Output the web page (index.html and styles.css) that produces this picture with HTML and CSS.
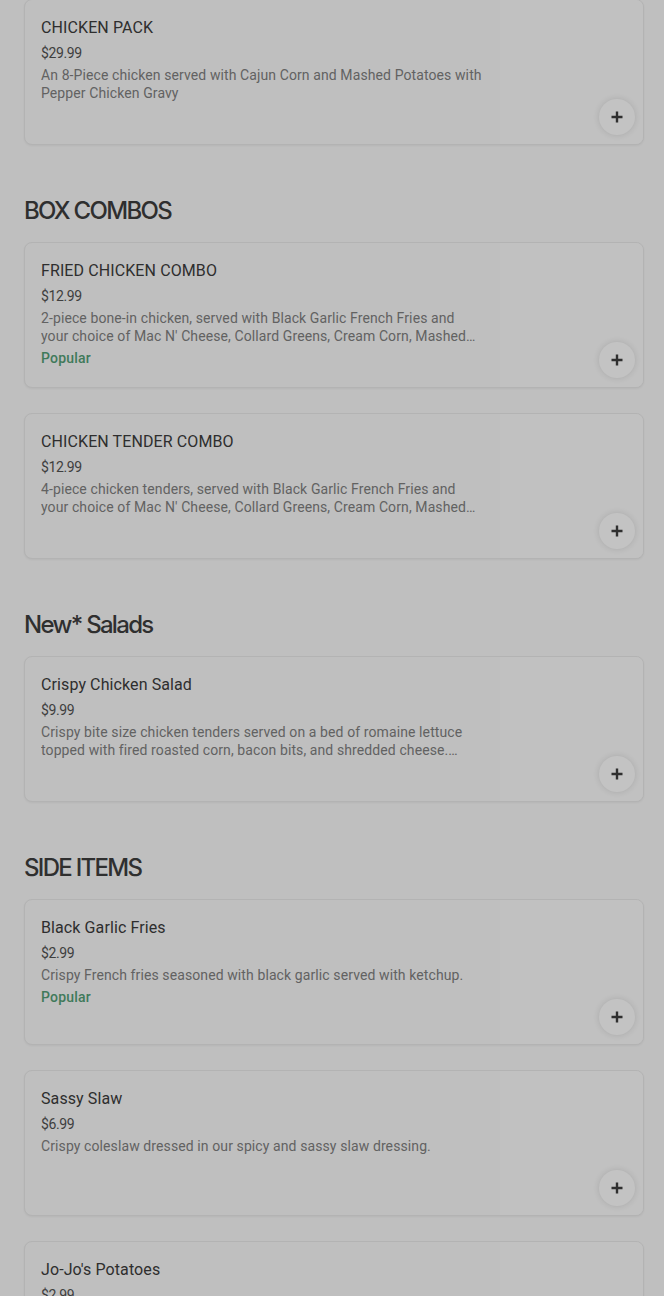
FILE: index.html
```html
<!DOCTYPE html>
<html lang="en">
<head>
<meta charset="utf-8">
<title>Menu</title>
<link rel="stylesheet" href="styles.css">
</head>
<body>
<main class="menu">
  <section class="group">
    <ul class="items">
      <li class="card">
        <div class="info">
          <h3 class="name">CHICKEN PACK</h3>
          <p class="price">$29.99</p>
          <p class="desc">An 8-Piece chicken served with Cajun Corn and Mashed Potatoes with Pepper Chicken Gravy</p>
        </div>
        <div class="thumb"><button class="add" aria-label="Add"><svg viewBox="0 0 14 14" width="14" height="14"><path d="M7 1.5v11M1.5 7h11" stroke="#2f2f2f" stroke-width="2.4" fill="none"/></svg></button></div>
      </li>
    </ul>
  </section>

  <section class="group">
    <h2 class="heading">BOX COMBOS</h2>
    <ul class="items">
      <li class="card">
        <div class="info">
          <h3 class="name">FRIED CHICKEN COMBO</h3>
          <p class="price">$12.99</p>
          <p class="desc">2-piece bone-in chicken, served with Black Garlic French Fries and your choice of Mac N' Cheese, Collard Greens, Cream Corn, Mashed Potatoes and a drink</p>
          <p class="tag">Popular</p>
        </div>
        <div class="thumb"><button class="add" aria-label="Add"><svg viewBox="0 0 14 14" width="14" height="14"><path d="M7 1.5v11M1.5 7h11" stroke="#2f2f2f" stroke-width="2.4" fill="none"/></svg></button></div>
      </li>
      <li class="card">
        <div class="info">
          <h3 class="name">CHICKEN TENDER COMBO</h3>
          <p class="price">$12.99</p>
          <p class="desc">4-piece chicken tenders, served with Black Garlic French Fries and your choice of Mac N' Cheese, Collard Greens, Cream Corn, Mashed Potatoes and a drink</p>
        </div>
        <div class="thumb"><button class="add" aria-label="Add"><svg viewBox="0 0 14 14" width="14" height="14"><path d="M7 1.5v11M1.5 7h11" stroke="#2f2f2f" stroke-width="2.4" fill="none"/></svg></button></div>
      </li>
    </ul>
  </section>

  <section class="group">
    <h2 class="heading">New* Salads</h2>
    <ul class="items">
      <li class="card">
        <div class="info">
          <h3 class="name">Crispy Chicken Salad</h3>
          <p class="price">$9.99</p>
          <p class="desc">Crispy bite size chicken tenders served on a bed of romaine lettuce topped with fired roasted corn, bacon bits, and shredded cheese. Served with ranch dressing.</p>
        </div>
        <div class="thumb"><button class="add" aria-label="Add"><svg viewBox="0 0 14 14" width="14" height="14"><path d="M7 1.5v11M1.5 7h11" stroke="#2f2f2f" stroke-width="2.4" fill="none"/></svg></button></div>
      </li>
    </ul>
  </section>

  <section class="group">
    <h2 class="heading">SIDE ITEMS</h2>
    <ul class="items">
      <li class="card">
        <div class="info">
          <h3 class="name">Black Garlic Fries</h3>
          <p class="price">$2.99</p>
          <p class="desc">Crispy French fries seasoned with black garlic served with ketchup.</p>
          <p class="tag">Popular</p>
        </div>
        <div class="thumb"><button class="add" aria-label="Add"><svg viewBox="0 0 14 14" width="14" height="14"><path d="M7 1.5v11M1.5 7h11" stroke="#2f2f2f" stroke-width="2.4" fill="none"/></svg></button></div>
      </li>
      <li class="card">
        <div class="info">
          <h3 class="name">Sassy Slaw</h3>
          <p class="price">$6.99</p>
          <p class="desc">Crispy coleslaw dressed in our spicy and sassy slaw dressing.</p>
        </div>
        <div class="thumb"><button class="add" aria-label="Add"><svg viewBox="0 0 14 14" width="14" height="14"><path d="M7 1.5v11M1.5 7h11" stroke="#2f2f2f" stroke-width="2.4" fill="none"/></svg></button></div>
      </li>
      <li class="card">
        <div class="info">
          <h3 class="name">Jo-Jo's Potatoes</h3>
          <p class="price">$2.99</p>
          <p class="desc">Seasoned potato wedges fried golden and crispy.</p>
        </div>
        <div class="thumb"><button class="add" aria-label="Add"><svg viewBox="0 0 14 14" width="14" height="14"><path d="M7 1.5v11M1.5 7h11" stroke="#2f2f2f" stroke-width="2.4" fill="none"/></svg></button></div>
      </li>
    </ul>
  </section>
</main>
</body>
</html>
```

FILE: styles.css
```css
* { box-sizing: border-box; }

html, body {
  margin: 0;
  padding: 0;
  background: #bfbfbf;
  font-family: Roboto, "Liberation Sans", sans-serif;
  color: #2e2e2e;
}

.menu {
  display: flex;
  flex-direction: column;
  margin-top: -1px;
  padding: 0 20px 40px 24px;
}

.group + .group {
  margin-top: 50px;
}

.heading {
  margin: 0 0 15px;
  font-family: Inter, "Liberation Sans", sans-serif;
  font-size: 24px;
  line-height: 32px;
  font-weight: 500;
  letter-spacing: -1.7px;
  color: #2f2f2f;
}

.items {
  list-style: none;
  margin: 0;
  padding: 0;
  display: flex;
  flex-direction: column;
  gap: 25px;
}

.card {
  display: flex;
  height: 146px;
  border: 1px solid #b3b3b3;
  border-radius: 8px;
  background: #bfbfbf;
  box-shadow: 0 1px 2px rgba(0, 0, 0, 0.05);
  overflow: hidden;
}

.info {
  flex: 1;
  min-width: 0;
  padding: 17px 16px 0 16px;
}

.name {
  margin: 0;
  font-size: 16px;
  line-height: 22px;
  font-weight: 400;
  color: #2e2e2e;
  letter-spacing: 0.1px;
}

.price {
  margin: 4px 0 0;
  font-size: 14px;
  line-height: 20px;
  color: #3e3e3e;
  letter-spacing: -0.4px;
}

.desc {
  margin: 3px 0 0;
  font-size: 14px;
  line-height: 18px;
  color: #626262;
  letter-spacing: 0.1px;
  display: -webkit-box;
  -webkit-line-clamp: 2;
  -webkit-box-orient: vertical;
  overflow: hidden;
}

.tag {
  margin: 3px 0 0;
  font-size: 14px;
  line-height: 20px;
  font-weight: 500;
  color: #3f7a5a;
  letter-spacing: 0.2px;
}

.thumb {
  position: relative;
  flex: 0 0 143px;
  background: #c1c1c1;
}

.add {
  position: absolute;
  right: 8px;
  bottom: 9px;
  width: 36px;
  height: 36px;
  padding: 0;
  border: none;
  border-radius: 50%;
  background: #c3c3c3;
  box-shadow: 0 0 6px rgba(0, 0, 0, 0.12);
  display: flex;
  align-items: center;
  justify-content: center;
}
```
